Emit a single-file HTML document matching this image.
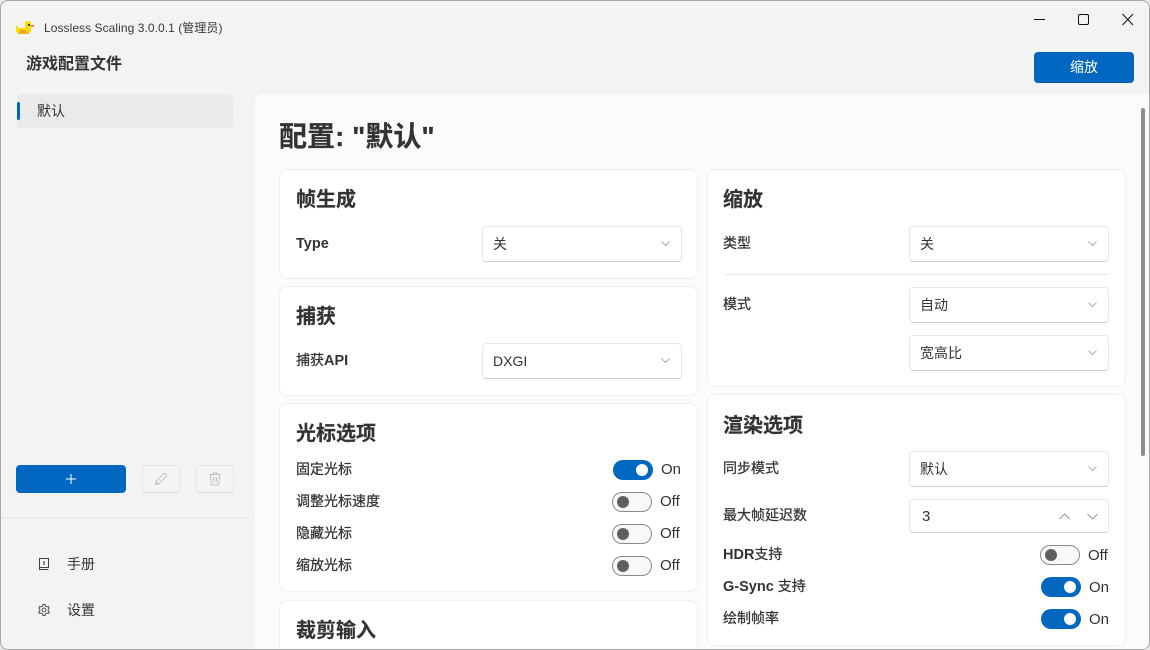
<!DOCTYPE html>
<html lang="zh"><head><meta charset="utf-8"><title>Lossless Scaling</title>
<style>
html,body{margin:0;padding:0;width:1150px;height:650px;overflow:hidden;background:#e8e8e8}
*{box-sizing:border-box}
body{font-family:"Liberation Sans","Noto Sans CJK SC",sans-serif;color:#2b2b2b}
#w{position:absolute;left:0;top:0;width:1150px;height:650px;background:#f3f3f3;border:1px solid #a8a8a8;border-radius:8px;overflow:hidden}
.t{position:absolute;white-space:nowrap;line-height:20px}
.abs{position:absolute}
.card{position:absolute;background:#fff;border:1px solid #efefef;border-radius:8px;width:419px}
.h{position:absolute;white-space:nowrap;font-size:20px;font-weight:700;line-height:28px;color:#333;-webkit-text-stroke:.2px #333}
.l{position:absolute;white-space:nowrap;font-size:14px;font-weight:400;line-height:20px;color:#333;-webkit-text-stroke:.25px #333}
.b{font-size:14.5px;font-weight:700;-webkit-text-stroke:0;margin-top:1px}
.b span{font-size:14px;font-weight:400;-webkit-text-stroke:.25px #333}
.sel{position:absolute;background:#fff;border:1px solid #e8e8e8;border-bottom:1px solid #cfcfcf;border-radius:4px;width:200px;height:36px;font-size:14px;line-height:34px;padding-left:10px;color:#333}
.sel svg{position:absolute;right:11px;top:14px}
.tg{position:absolute;width:40px;height:20px;border-radius:10px}
.tg.on{background:#0067c0}
.tg.on i{position:absolute;right:5px;top:4px;width:12px;height:12px;border-radius:6px;background:#fff}
.tg.off{background:#f8f8f8;border:1px solid #8a8a8a}
.tg.off i{position:absolute;left:4px;top:3px;width:12px;height:12px;border-radius:6px;background:#5f5f5f}
.st{position:absolute;font-size:15px;line-height:20px;color:#333;white-space:nowrap}
</style></head><body>
<div id="w">
<!-- duck -->
<svg class="abs" style="left:14px;top:19px" width="20" height="16" viewBox="0 0 20 16" shape-rendering="crispEdges">
<rect x="10" y="2" width="6" height="7" fill="#fce000"/><rect x="11" y="1" width="4" height="1" fill="#fce000"/>
<rect x="1" y="6" width="2" height="3" fill="#fce000"/><rect x="1" y="9" width="15" height="3" fill="#fcd800"/>
<rect x="3" y="8" width="9" height="1" fill="#fcd800"/><rect x="3" y="12" width="11" height="2" fill="#f8b800"/>
<rect x="5" y="10" width="6" height="3" fill="#f8a020"/><rect x="13" y="4" width="2" height="2" fill="#4a3a00"/>
<rect x="16" y="5" width="3" height="2" fill="#f88030"/>
</svg>
<div class="t" style="left:43px;top:17px;font-size:12px;color:#3a3a3a;letter-spacing:.06px">Lossless Scaling 3.0.0.1 (管理员)</div>
<!-- window controls -->
<svg class="abs" style="left:1028px;top:7px" width="110" height="22" viewBox="0 0 110 22" fill="none" stroke="#111" stroke-width="1">
<path d="M5 11.5H16"/><rect x="49.5" y="6.5" width="10" height="10" rx="1.5"/><path d="M93.5 6L104 17M104 6L93.5 17"/>
</svg>
<div class="t" style="left:25px;top:54px;font-size:16px;font-weight:700;color:#333">游戏配置文件</div>
<div class="abs" style="left:1033px;top:51px;width:100px;height:31px;background:#0067c0;border-radius:4px;border-bottom:1px solid #0059a8;color:#fff;font-size:14px;text-align:center;line-height:31px">缩放</div>
<!-- sidebar -->
<div class="abs" style="left:16px;top:93px;width:216px;height:34px;background:#eaeaea;border-radius:4px"></div>
<div class="abs" style="left:16px;top:101px;width:3px;height:18px;background:#0067c0;border-radius:2px"></div>
<div class="t" style="left:36px;top:100px;font-size:14px;color:#333">默认</div>
<div class="abs" style="left:15px;top:464px;width:110px;height:28px;background:#0067c0;border-radius:4px"></div>
<svg class="abs" style="left:64px;top:472px" width="12" height="12" fill="none" stroke="#fff" stroke-width="1"><path d="M6 1V11M1 6H11"/></svg>
<div class="abs" style="left:141px;top:464px;width:38px;height:28px;background:#f5f5f5;border:1px solid #e6e6e6;border-bottom-color:#d6d6d6;border-radius:4px"></div>
<svg class="abs" style="left:153px;top:471px" width="14" height="14" fill="none" stroke="#bdbdbd" stroke-width="1"><path d="M1.5 12.5L2.5 9L9.5 2A1.6 1.6 0 0 1 12 4.5L5 11.5Z"/></svg>
<div class="abs" style="left:195px;top:464px;width:38px;height:28px;background:#f5f5f5;border:1px solid #e6e6e6;border-bottom-color:#d6d6d6;border-radius:4px"></div>
<svg class="abs" style="left:207px;top:471px" width="14" height="14" fill="none" stroke="#bdbdbd" stroke-width="1"><path d="M1.5 2.5H12.5M5 2.5V1H9V2.5M2.5 2.5L3.3 12A1 1 0 0 0 4.3 13H9.7A1 1 0 0 0 10.7 12L11.5 2.5M5.7 5V10.5M8.3 5V10.5"/></svg>
<div class="abs" style="left:0;top:516px;width:249px;height:1px;background:#e3e3e3"></div>
<svg class="abs" style="left:37px;top:556px" width="12" height="14" fill="none" stroke="#444" stroke-width="1"><path d="M1.5 10.5V1.5H10.5V10.5H1.5V12.5H10.5"/><path d="M6 4V8" stroke-width="1.2"/></svg>
<div class="t" style="left:66px;top:553px;font-size:14px;color:#333">手册</div>
<svg class="abs" style="left:37px;top:602px" width="12" height="14" viewBox="0 0 12 14" fill="none" stroke="#444" stroke-width=".9"><circle cx="6" cy="7" r="1.9"/><path d="M5 1.5H7L7.4 3.1L8.8 3.9L10.4 3.4L11.3 5L10.2 6.2V7.8L11.3 9L10.4 10.6L8.8 10.1L7.4 10.9L7 12.5H5L4.6 10.9L3.2 10.1L1.6 10.6L.7 9L1.8 7.8V6.2L.7 5L1.6 3.4L3.2 3.9L4.6 3.1Z"/></svg>
<div class="t" style="left:66px;top:599px;font-size:14px;color:#333">设置</div>
<!-- content panel -->
<div class="abs" style="left:254px;top:93px;width:900px;height:560px;background:#fbfbfb;border-radius:8px 0 0 0"></div>
<div class="abs" style="left:1140px;top:107px;width:4px;height:348px;background:#8c8c8c;border-radius:2px"></div>
<div class="t" style="left:278px;top:119px;font-size:28px;font-weight:700;line-height:34px;color:#333;-webkit-text-stroke:.2px #333">配置: "默认"</div>

<!-- card 1 -->
<div class="card" style="left:278px;top:168px;height:110px"></div>
<div class="h" style="left:295px;top:185px">帧生成</div>
<div class="l b" style="left:295px;top:232px">Type</div>
<div class="sel" style="left:481px;top:225px">关<svg width="9" height="6" fill="none" stroke="#aaa"><path d="M.5 .5L4.5 4.5L8.5 .5"/></svg></div>
<!-- card 2 -->
<div class="card" style="left:278px;top:285px;height:110px"></div>
<div class="h" style="left:295px;top:302px">捕获</div>
<div class="l b" style="left:295px;top:348px"><span>捕获</span>API</div>
<div class="sel" style="left:481px;top:342px">DXGI<svg width="9" height="6" fill="none" stroke="#aaa"><path d="M.5 .5L4.5 4.5L8.5 .5"/></svg></div>
<!-- card 3 -->
<div class="card" style="left:278px;top:402px;height:189px"></div>
<div class="h" style="left:295px;top:419px">光标选项</div>
<div class="l" style="left:295px;top:458px">固定光标</div>
<div class="tg on" style="left:612px;top:459px"><i></i></div><div class="st" style="left:660px;top:459px">On</div>
<div class="l" style="left:295px;top:490px">调整光标速度</div>
<div class="tg off" style="left:611px;top:491px"><i></i></div><div class="st" style="left:659px;top:491px">Off</div>
<div class="l" style="left:295px;top:522px">隐藏光标</div>
<div class="tg off" style="left:611px;top:523px"><i></i></div><div class="st" style="left:659px;top:523px">Off</div>
<div class="l" style="left:295px;top:554px">缩放光标</div>
<div class="tg off" style="left:611px;top:555px"><i></i></div><div class="st" style="left:659px;top:555px">Off</div>
<!-- card 4 -->
<div class="card" style="left:278px;top:599px;height:80px"></div>
<div class="h" style="left:295px;top:616px">裁剪输入</div>

<!-- right card 1 -->
<div class="card" style="left:706px;top:168px;height:218px"></div>
<div class="h" style="left:722px;top:185px">缩放</div>
<div class="l" style="left:722px;top:232px">类型</div>
<div class="sel" style="left:908px;top:225px">关<svg width="9" height="6" fill="none" stroke="#aaa"><path d="M.5 .5L4.5 4.5L8.5 .5"/></svg></div>
<div class="abs" style="left:723px;top:273px;width:385px;height:1px;background:#ebebeb"></div>
<div class="l" style="left:722px;top:293px">模式</div>
<div class="sel" style="left:908px;top:286px">自动<svg width="9" height="6" fill="none" stroke="#aaa"><path d="M.5 .5L4.5 4.5L8.5 .5"/></svg></div>
<div class="sel" style="left:908px;top:334px">宽高比<svg width="9" height="6" fill="none" stroke="#aaa"><path d="M.5 .5L4.5 4.5L8.5 .5"/></svg></div>
<!-- right card 2 -->
<div class="card" style="left:706px;top:393px;height:252px"></div>
<div class="h" style="left:722px;top:411px">渲染选项</div>
<div class="l" style="left:722px;top:457px">同步模式</div>
<div class="sel" style="left:908px;top:450px">默认<svg width="9" height="6" fill="none" stroke="#aaa"><path d="M.5 .5L4.5 4.5L8.5 .5"/></svg></div>
<div class="l" style="left:722px;top:504px">最大帧延迟数</div>
<div class="sel" style="left:908px;top:498px;height:34px;padding-left:12px;line-height:34px;font-size:15px">3
<svg style="right:38px;top:13px" width="11" height="7" fill="none" stroke="#999"><path d="M.5 6L5.5 1L10.5 6"/></svg>
<svg style="right:10px;top:13px" width="11" height="7" fill="none" stroke="#999"><path d="M.5 1L5.5 6L10.5 1"/></svg></div>
<div class="l b" style="left:722px;top:542px">HDR<span>支持</span></div>
<div class="tg off" style="left:1039px;top:544px"><i></i></div><div class="st" style="left:1087px;top:545px">Off</div>
<div class="l b" style="left:722px;top:574px">G-Sync <span>支持</span></div>
<div class="tg on" style="left:1040px;top:576px"><i></i></div><div class="st" style="left:1088px;top:577px">On</div>
<div class="l" style="left:722px;top:607px">绘制帧率</div>
<div class="tg on" style="left:1040px;top:608px"><i></i></div><div class="st" style="left:1088px;top:609px">On</div>
</div>
</body></html>
